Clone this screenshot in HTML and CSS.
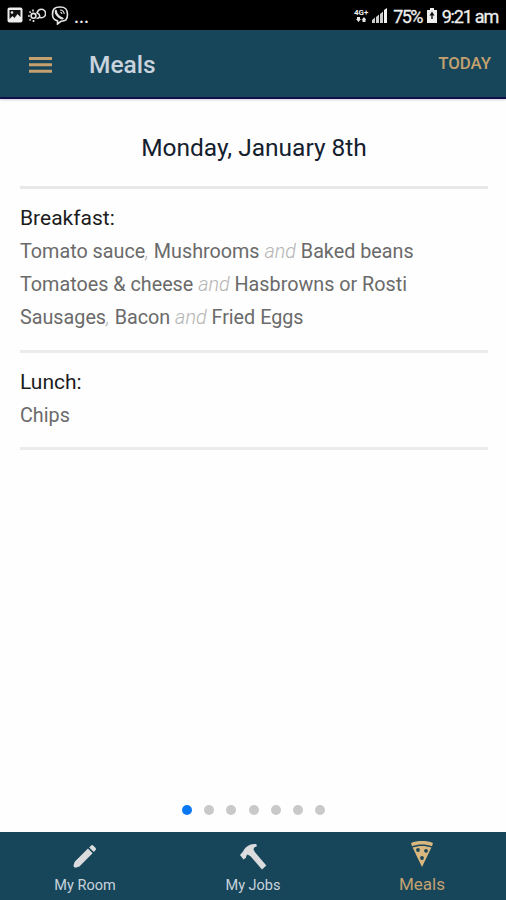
FILE: index.html
```html
<!DOCTYPE html>
<html lang="en">
	<head>
		<meta charset="UTF-8" />
		<meta name="viewport" content="width=device-width, initial-scale=1.0" />
		<title>Meals</title>
		<link rel="stylesheet" href="styles.css">
	</head>
	<body>
		<div class="status-bar">
			<div class="status-left">
				<svg width="16" height="16" viewBox="0 0 16 16">
					<rect x="0.5" y="0.5" width="15" height="15" rx="2" fill="#eee" />
					<path d="M2.500 3h11v7l-3-3-3 4-2-2-3 3z" fill="#111" />
					<circle cx="5" cy="5.500" r="1.300" fill="#eee" />
				</svg>
				<svg width="18" height="14" viewBox="0 0 18 14" fill="none" stroke="#e4e4e4" stroke-width="1.600">
					<circle cx="5.500" cy="7.800" r="2.400" />
					<path d="M8.500 10.500c1.500 0 2.500-.6 3-1.800.5-1.800-.3-3-2.500-4C9.800 2.500 11.500 1.200 13.300 1.200a4.300 4.300 0 0 1 0 8.600c-1 0-1.600-.2-2.200-.6" />
					<path d="M5 1.500v2M5.500 12v2M0 8h1.800M1.500 3.500l1.300 1.300M1.500 12.500l1.300-1.300" />
				</svg>
				<svg width="18" height="19" viewBox="0 0 18 19" fill="none" stroke="#e4e4e4" stroke-width="1.600">
					<path d="M9 1c5.500 0 7.500 2 7.500 7.500S14.500 15 10 15.300L6.500 18v-3.200C2.800 14 1.500 12.500 1.500 8.500 1.500 3 3.500 1 9 1z" />
					<path d="M5.600 4.300c-1.500 1-.4 3.400 1.200 5.200s4.200 3.500 5.200 2.200" stroke-width="2.400" />
					<path d="M9 4c2.600.1 4 1.500 4.200 4M9.300 6.300c1 .1 1.500.7 1.600 1.600" stroke-width="1.100" />
				</svg>
				<span class="more">...</span>
			</div>
			<div class="status-right">
				<div class="network">
					<span>4G+</span>
					<svg width="10" height="5" viewBox="0 0 10 5" fill="#e4e4e4">
						<path d="M0 2h1V0h3v2h1L2.500 5zM5.500 3h1v2h3V3h1L8 0z" />
					</svg>
				</div>
				<svg class="signal" width="15" height="15" viewBox="0 0 15 15">
					<path d="M0 15v-3l3-2.500V15zM4 15V9l3-2.500V15zM8 15V6l3-2.500V15z" fill="#ccc" />
					<path d="M12 15V2l3-2v15z" fill="#f4f4f4" />
				</svg>
				<span class="percent">75%</span>
				<svg class="battery" width="10" height="15" viewBox="0 0 10 15">
					<path d="M3 0h4v2h3v13H0V2h3z" fill="#eee" />
					<path d="M5 3.500L2.500 7.500H4.300V11H5.700V7.500H7.500z" fill="#111" />
				</svg>
				<span class="clock">9:21 am</span>
			</div>
		</div>

		<header>
			<svg class="menu" width="23" height="16" viewBox="0 0 23 16" fill="#c4a16f">
				<path d="M0 0h23v3H0zM0 6.300h23v3H0zM0 12.700h23v3H0z" />
			</svg>
			<h1>Meals</h1>
			<button class="today">TODAY</button>
		</header>

		<main>
			<h2>Monday, January 8th</h2>
			<section class="meal">
				<h3>Breakfast:</h3>
				<p>Tomato sauce<i>,</i> Mushrooms <i>and</i> Baked beans</p>
				<p>Tomatoes &amp; cheese <i>and</i> Hasbrowns or Rosti</p>
				<p>Sausages<i>,</i> Bacon <i>and</i> Fried Eggs</p>
			</section>
			<section class="meal">
				<h3>Lunch:</h3>
				<p>Chips</p>
			</section>
		</main>

		<div class="pager">
			<span class="dot active"></span>
			<span class="dot"></span>
			<span class="dot"></span>
			<span class="dot"></span>
			<span class="dot"></span>
			<span class="dot"></span>
			<span class="dot"></span>
		</div>

		<nav>
			<a class="tab">
				<svg width="28" height="28" viewBox="0 0 28 28" fill="#dcdcdf">
					<path d="M2.500 23.500l1.200-3.700L17 6.600l4.600 4.600L8.400 24.500l-4 1.300q-2-.2-1.900-2.300z" />
					<path d="M18.200 5.400l1.700-1.700c.8-.8 1.700-.8 2.500 0l2 2c.8.8.8 1.700 0 2.500l-1.600 1.700z" />
				</svg>
				<span>My Room</span>
			</a>
			<a class="tab">
				<svg width="28" height="28" viewBox="0 0 28 28" fill="#dcdcdf">
					<path d="M1 13l3-3.500C5 6.500 8 4 11 2.700c2-.8 4.200-.9 6.300-.7l.6 2.200c-2.400.8-3.500 2-3.200 3.800l1.500 2.500L27.300 23.500l-4.300 4-11.500-13.300-2.800-1.600-1.400 1.200-.3 2-2.500 1.700z" />
				</svg>
				<span>My Jobs</span>
			</a>
			<a class="tab selected">
				<svg width="28" height="28" viewBox="0 0 28 28">
					<path d="M3 3c6.500-2.600 15.500-2.600 22 0l-1 3.200C18 4 10 4 4 6.200z" fill="#d9b77e" />
					<path d="M4.600 7.500c5.800-2.100 13-2.100 18.800 0L14 27z" fill="#d9b77e" />
					<g fill="#17465a">
						<circle cx="10" cy="10" r="1.900" />
						<circle cx="18" cy="10.800" r="1.900" />
						<circle cx="14" cy="18" r="1.900" />
					</g>
				</svg>
				<span>Meals</span>
			</a>
		</nav>
	</body>
</html>
```

FILE: styles.css
```css
body {
	font-family: Roboto, "Liberation Sans", sans-serif;
	margin: 0;
	height: 900px;
	display: flex;
	flex-direction: column;
	background-color: #fefefe;
	overflow: hidden;
}

h1,
h2,
h3,
p {
	margin: 0;
	font-weight: normal;
}

/* phone status bar */
.status-bar {
	height: 30px;
	box-sizing: border-box;
	padding: 0 8px 0 7px;
	display: flex;
	justify-content: space-between;
	background-color: #000;
	color: #eee;
}
.status-left,
.status-right {
	display: flex;
	align-items: center;
}
.status-left {
	gap: 5px;
}
.more {
	font-size: 18px;
	font-weight: 500;
	padding-top: 3px;
}
.network {
	display: flex;
	flex-direction: column;
	align-items: center;
	margin-right: 4px;
	font-size: 8px;
	font-weight: bold;
	line-height: 8px;
}
.signal {
	margin-right: 6px;
}
.percent,
.clock {
	font-size: 18px;
	line-height: 30px;
	padding-top: 3px;
	letter-spacing: -1.2px;
	-webkit-text-stroke: 0.3px #eee;
}
.percent {
	letter-spacing: -1.7px;
}
.battery {
	margin: 0 5px;
}

header {
	height: 69px;
	box-sizing: border-box;
	padding: 2px 15px 0 29px;
	display: flex;
	align-items: center;
	background-color: #17465a;
	border-bottom: 2px solid #12104a;
	box-shadow: 0 1px 2px rgba(20, 10, 80, 0.2);
}
h1 {
	margin-left: 37px;
	font-size: 24.5px;
	font-weight: 500;
	color: #c9d3dd;
}
.today {
	margin-left: auto;
	padding: 0 0 3px;
	border: none;
	background: none;
	font-family: inherit;
	font-size: 16.8px;
	font-weight: 500;
	color: #c4a16f;
}

main {
	flex: 1;
	padding: 0 18px 0 20px;
}
h2 {
	height: 90px;
	box-sizing: border-box;
	padding-top: 5px;
	line-height: 88px;
	border-bottom: 3px solid #e8e8e8;
	text-align: center;
	font-size: 24.5px;
	color: #14202e;
}
.meal {
	padding: 13px 0 15px;
	border-bottom: 3px solid #ebebeb;
}
h3 {
	font-size: 21px;
	line-height: 33px;
	color: #1c1c1c;
}
p {
	font-size: 19.75px;
	line-height: 33.200px;
	color: #6a6a6a;
}
i {
	color: #b4b4b4;
	font-weight: 300;
}

.pager {
	display: flex;
	justify-content: center;
	gap: 12.200px;
	padding: 0 0 17px 1px;
}
.dot {
	width: 10px;
	height: 10px;
	border-radius: 50%;
	background-color: #c9c9c9;
}
.dot.active {
	background-color: #0a78f5;
}

nav {
	height: 68px;
	padding-left: 1px;
	display: flex;
	background-color: #17465a;
}
.tab {
	flex: 1;
	display: flex;
	flex-direction: column;
	align-items: center;
	padding-top: 10px;
	font-size: 14.5px;
	color: #c9d3dd;
}
.tab span {
	margin-top: 7px;
}
.tab.selected {
	padding: 8px 0 0 1px;
	font-size: 17px;
	color: #c4a16f;
}
.tab.selected span {
	margin-top: 6px;
}
```
